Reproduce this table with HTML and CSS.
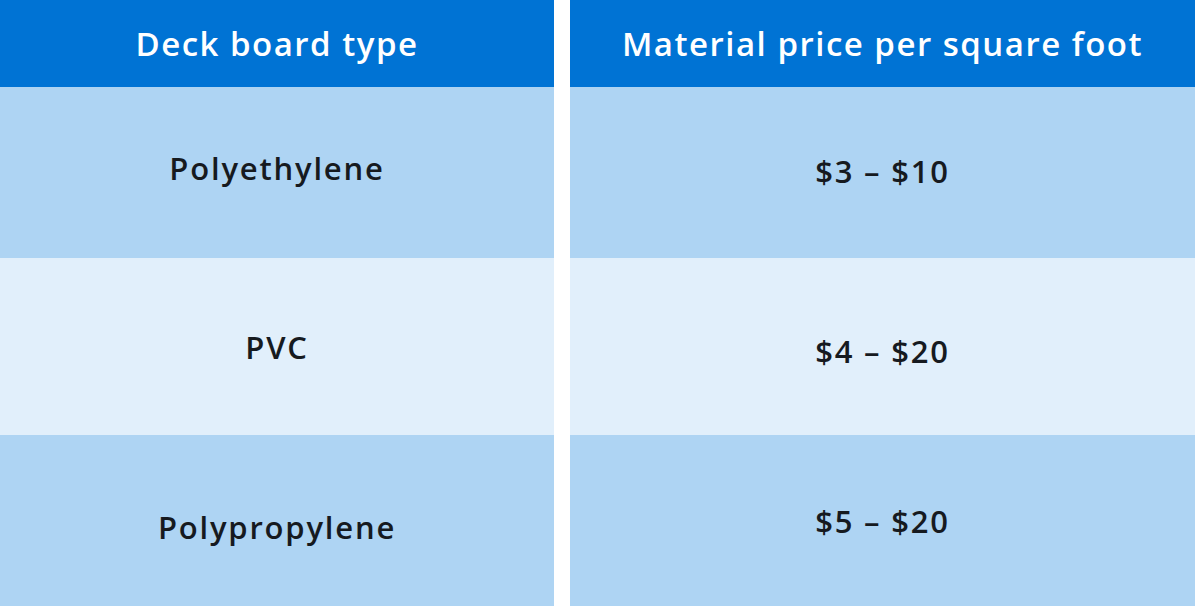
FILE: index.html
```html
<!DOCTYPE html>
<html lang="en">
<head>
    <meta charset="UTF-8">
    <title>Deck board prices</title>
    <link rel="stylesheet" href="styles.css">
</head>
<body>
    <div class="price-table">
        <div class="cell head">Deck board type</div>
        <div class="cell head">Material price per square foot</div>

        <div class="cell dark up-lg">Polyethylene</div>
        <div class="cell dark up-sm">$3 – $10</div>

        <div class="cell light">PVC</div>
        <div class="cell light down-sm">$4 – $20</div>

        <div class="cell dark down-lg">Polypropylene</div>
        <div class="cell dark">$5 – $20</div>
    </div>
</body>
</html>
```

FILE: styles.css
```css
body {
    margin: 0;
    background: #fff;
    font-family: "Open Sans", "Noto Sans", sans-serif;
    font-weight: 600;
    color: #161a1f;
}
.price-table {
    display: grid;
    grid-template-columns: 554px 625px;
    grid-template-rows: 87px 171px 177px 171px;
    column-gap: 16px;
    width: 1195px;
}
.cell {
    display: flex;
    align-items: center;
    justify-content: center;
    font-size: 31px;
    letter-spacing: 1.8px;
}
.head {
    background-color: #0073d4;
    color: #fff;
    font-size: 33px;
    letter-spacing: 1.5px;
}
.dark {
    background-color: #aed4f3;
}
.light {
    background-color: #e1effb;
}
/* small vertical nudges so the baselines sit where the original has them */
.up-lg {
    padding-bottom: 10px;
}
.up-sm {
    padding-bottom: 4px;
}
.down-sm {
    padding-top: 8px;
}
.down-lg {
    padding-top: 12px;
}
```
